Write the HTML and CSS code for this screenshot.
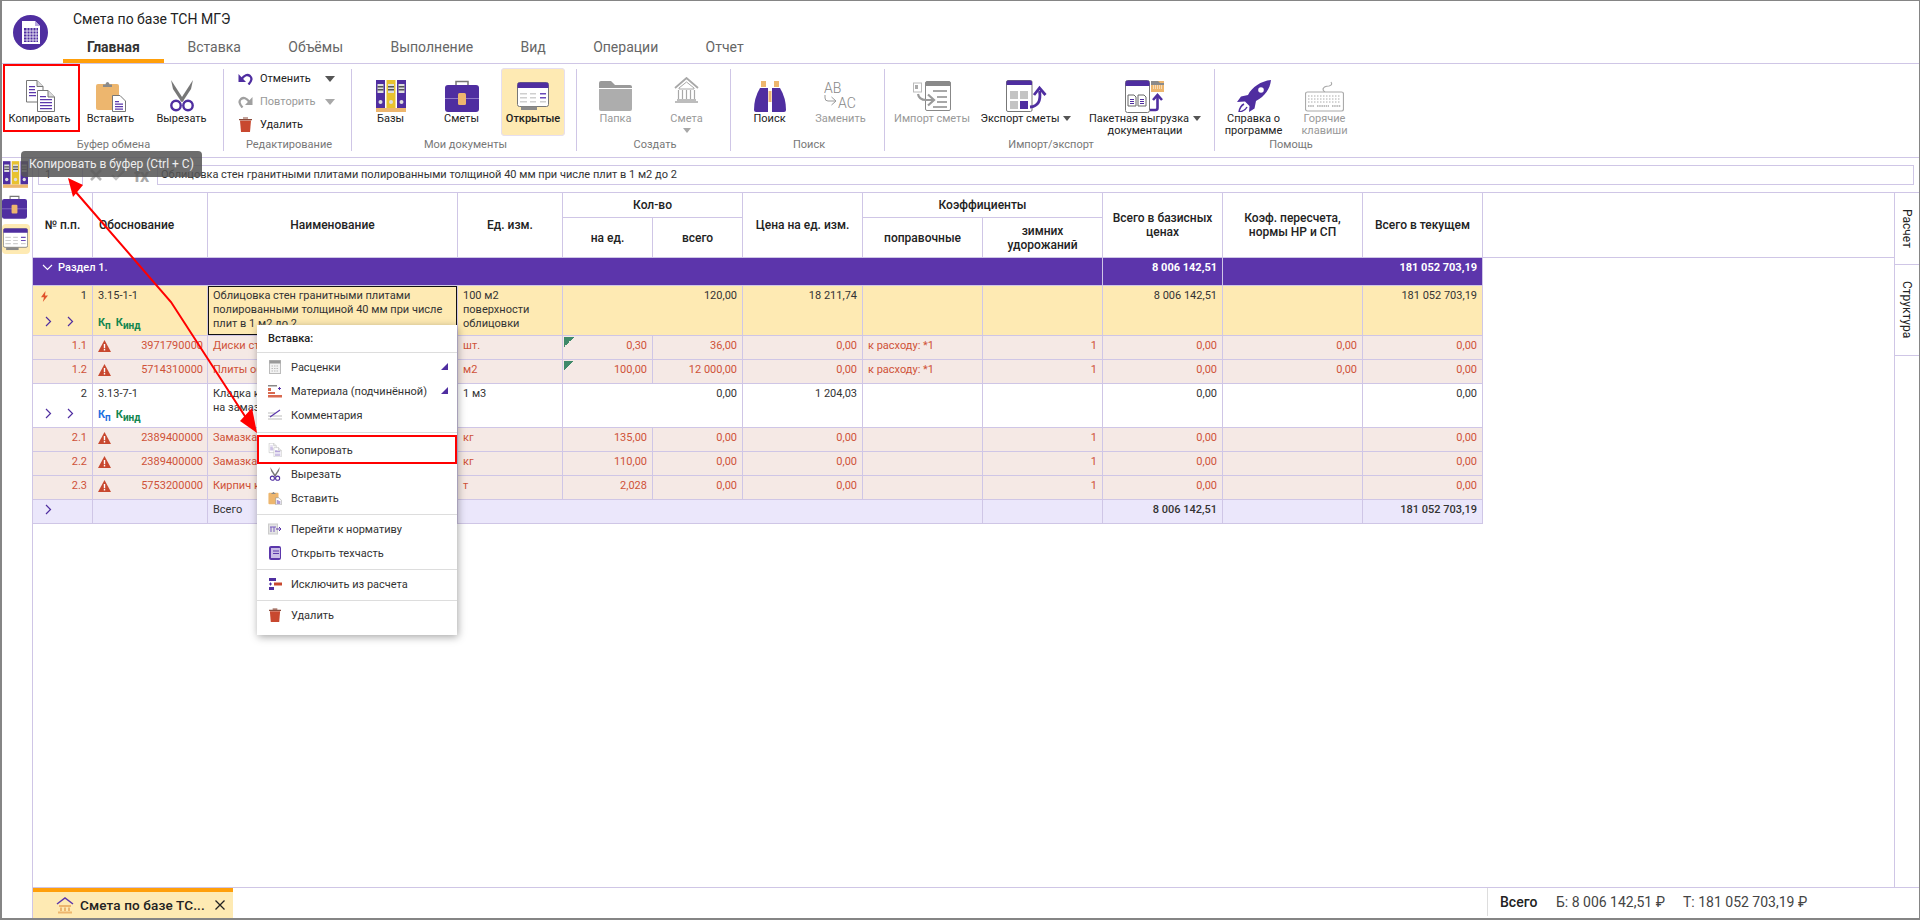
FILE: index.html
```html
<!DOCTYPE html>
<html lang="ru">
<head>
<meta charset="utf-8">
<title>Смета по базе ТСН МГЭ</title>
<link rel="stylesheet" href="styles.css">
</head>
<body>
<svg class="defs" width="0" height="0">
  <symbol id="i-copy" viewBox="0 0 30 32">
    <path d="M1.5.5H12L18 6.500V22H1.500Z" fill="#fff" stroke="#777"/><path d="M12 .5V6.500H18" fill="#ddd" stroke="#777"/>
    <path d="M4 6h6v1.300H4zM4 9h6v1.300H4zM4 12h7v1.300H4zM4 15h7v1.300H4z" fill="#5b37ab"/>
    <path d="M12.500 10.500H23L29.500 17V31.500H12.500Z" fill="#fff" stroke="#777"/><path d="M23 10.500V17H29.500" fill="#ddd" stroke="#777"/>
    <path d="M15 16h6v1.300h-6zM15 19h12v1.300H15zM15 22h12v1.300H15zM15 25h12v1.300H15zM15 28h12v1.300H15z" fill="#5b37ab"/>
  </symbol>
  <symbol id="i-paste" viewBox="0 0 30 32">
    <rect x="0" y="4" width="23" height="26" rx="2" fill="#edb66e"/>
    <path d="M7 7V4.500H9.500A2 2.500 0 0 1 13.500 4.500H16V7Z" fill="#8a8a8a"/>
    <path d="M16.500 15.500H24L29.500 21V31.500H16.500Z" fill="#fff" stroke="#777"/>
    <path d="M19 21h4v1.200h-4zM19 23.500h8v1.200h-8zM19 26h8v1.200h-8zM19 28.500h8v1.200h-8z" fill="#5b37ab"/>
  </symbol>
  <symbol id="i-cut" viewBox="0 0 24 32">
    <path d="M1 0L14 20L11.500 22L3 9Z" fill="#777"/><path d="M23 0L10 20L12.500 22L21 9Z" fill="#777"/>
    <circle cx="6" cy="25.500" r="4.700" fill="none" stroke="#4f2ea0" stroke-width="2.400"/><circle cx="18" cy="25.500" r="4.700" fill="none" stroke="#4f2ea0" stroke-width="2.400"/>
  </symbol>
  <symbol id="i-bases" viewBox="0 0 30 32">
    <rect width="9" height="28" fill="#4f2ea0"/><rect x="10.500" width="9" height="28" fill="#e8c22f"/><rect x="21" width="9" height="28" fill="#4f2ea0"/>
    <path d="M1.500 4h6v9h-6zM12 4h6v9h-6zM22.500 4h6v9h-6z" fill="#ddd"/>
    <path d="M1.500 6h6v1.500h-6zM1.500 9h6v1.500h-6zM12 6h6v1.500h-6zM12 9h6v1.500h-6zM22.500 6h6v1.500h-6zM22.500 9h6v1.500h-6z" fill="#555"/>
    <circle cx="4.500" cy="22" r="2" fill="#ddd"/><circle cx="15" cy="22" r="2" fill="#ddd"/><circle cx="25.500" cy="22" r="2" fill="#ddd"/>
    <rect y="28" width="30" height="4" fill="#edb66e"/>
  </symbol>
  <symbol id="i-case" viewBox="0 0 34 32">
    <path d="M11 6V1.500H23V6" fill="none" stroke="#777" stroke-width="1.500"/>
    <rect y="5" width="34" height="27" rx="3" fill="#4f2ea0"/>
    <rect y="18" width="34" height="1" fill="#8f78c8"/>
    <rect x="13" y="13" width="8" height="12" rx="1.500" fill="#edb66e"/>
  </symbol>
  <symbol id="i-open" viewBox="0 0 32 29">
    <rect x=".5" y=".5" width="31" height="24" rx="2" fill="#fff" stroke="#777"/>
    <path d="M.5 2.500A2 2 0 0 1 2.500.5H29.500A2 2 0 0 1 31.500 2.500V6H.5Z" fill="#4f2ea0"/>
    <path d="M3 11h7v1.500H3zM13 11h6v1.500h-6zM3 15h7v1.500H3zM13 15h6v1.500h-6zM3 19h7v1.500H3zM13 19h6v1.500h-6z" fill="#cfcfcf"/>
    <path d="M23 11h6v1.500h-6zM23 15h6v1.500h-6z" fill="#6b4bb8"/><path d="M23 19h6v1.500h-6z" fill="#cfcfcf"/>
    <path d="M4 24.500H20V28H4Z" fill="#8a8a8a"/>
  </symbol>
  <symbol id="i-folder" viewBox="0 0 33 30">
    <path d="M0 2A2 2 0 0 1 2 0H12L16 4H31A2 2 0 0 1 33 6V7H0Z" fill="#9a9a9a"/>
    <path d="M0 8H33V28A2 2 0 0 1 31 30H2A2 2 0 0 1 0 28Z" fill="#adadad"/>
  </symbol>
  <symbol id="i-bank" viewBox="0 0 25 26">
    <path d="M1 11L12.500 1L24 11" fill="none" stroke="#a8a8a8" stroke-width="1.800"/>
    <path d="M5 11L12.500 5L20 11V12H5Z" fill="none" stroke="#a8a8a8"/>
    <path d="M4.500 13V22M8.500 13V22M12.500 13V22M16.500 13V22M20.500 13V22" stroke="#a8a8a8" stroke-width="1.200"/>
    <path d="M3 23H22M1 25H24" stroke="#a8a8a8" stroke-width="1.300"/>
  </symbol>
  <symbol id="i-bino" viewBox="0 0 32 32">
    <path d="M7 1h5v6H7zM20 1h5v6h-5z" fill="#edb66e"/>
    <path d="M6 8H14V32H2A2 2 0 0 1 0 30Q0 18 6 8Z" fill="#4f2ea0"/><path d="M26 8H18V32H30A2 2 0 0 0 32 30Q32 18 26 8Z" fill="#4f2ea0"/>
    <path d="M14.500 11h3v11h-3z" fill="#edb66e"/>
  </symbol>
  <symbol id="i-import" viewBox="0 0 38 30">
    <rect x=".5" y="2" width="8" height="9" fill="#fff" stroke="#bbb"/><rect x="2" y="4" width="3" height="4" fill="#aaa"/>
    <rect x="12.500" y=".5" width="25" height="29" rx="1.500" fill="#fff" stroke="#888"/>
    <path d="M12.500 2A1.500 1.500 0 0 1 14 .5H36A1.500 1.500 0 0 1 37.500 2V5H12.500Z" fill="#8a8a8a"/>
    <path d="M20 9h14v2H20zM24 15h10v2H24zM24 20h10v2H24zM20 25h14v2H20z" fill="#a8a8a8"/>
    <path d="M5 13Q6 19 13 19H20" fill="none" stroke="#9a9a9a" stroke-width="2.200"/><path d="M15 13.500L21 19L15 24.500" fill="none" stroke="#9a9a9a" stroke-width="2.200"/>
  </symbol>
  <symbol id="i-export" viewBox="0 0 41 32">
    <rect x=".5" y=".5" width="25.500" height="31" rx="1.500" fill="#fff" stroke="#777"/>
    <path d="M.5 2A1.500 1.500 0 0 1 2 .5H24.500A1.500 1.500 0 0 1 26 2V5H.5Z" fill="#4f2ea0"/>
    <path d="M4 11h8v8H4zM14 11h8v8h-8zM4 21h8v8H4z" fill="#c4c4c4"/><rect x="14" y="21" width="8" height="8" fill="#4f2ea0"/>
    <path d="M24 27Q36 26 33.500 11" fill="none" stroke="#4f2ea0" stroke-width="2.800"/><path d="M28 15L33.500 8L39.500 15" fill="none" stroke="#4f2ea0" stroke-width="2.800"/>
  </symbol>
  <symbol id="i-batch" viewBox="0 0 40 33">
    <rect x=".5" y=".5" width="24" height="32" rx="2" fill="#fff" stroke="#777"/>
    <path d="M.5 2.500A2 2 0 0 1 2.500.5H22.500A2 2 0 0 1 24.500 2.500V6H.5Z" fill="#4f2ea0"/>
    <path d="M3 15H9L11 17V26H3ZM13 15H19L21 17V26H13Z" fill="#fff" stroke="#666"/>
    <path d="M5 19h4v1H5zM5 21h4v1H5zM5 23h4v1H5zM15 19h4v1h-4zM15 21h4v1h-4zM15 23h4v1h-4z" fill="#4f2ea0"/>
    <path d="M26 1H39V12H26Z" fill="#edb66e"/><path d="M26 1H33L35 3H39V5H26Z" fill="#8a8a8a"/>
    <path d="M28 6h9M28 8h9" stroke="#fff" stroke-dasharray="1 1"/>
    <path d="M25 30H30.500A2 2 0 0 0 32.500 28V17" fill="none" stroke="#4f2ea0" stroke-width="2.600"/><path d="M28 20L32.500 15L37 20" fill="none" stroke="#4f2ea0" stroke-width="2.600"/>
  </symbol>
  <symbol id="i-rocket" viewBox="0 0 34 32">
    <path d="M34 0C24 1 15 7 11 15L4 16.500L0 22L8 21.500L12.500 26L12 32L17.500 28.500L19 21C28 16 33 9 34 0Z" fill="#4f2ea0"/>
    <circle cx="24" cy="10" r="2.800" fill="#fff"/>
    <path d="M7 24Q3 26 2 32Q8 31 10 27" fill="none" stroke="#4f2ea0" stroke-width="1.500"/>
  </symbol>
  <symbol id="i-keys" viewBox="0 0 39 31">
    <path d="M26 1Q28 4 24 5Q19 5 18 8Q18 10 20 11" fill="none" stroke="#aaa" stroke-width="1.200"/>
    <rect x=".5" y="11" width="38" height="19" rx="2" fill="#fff" stroke="#aaa" stroke-width="1.200"/>
    <path d="M3 15H36M3 18H36M3 21H36" stroke="#aaa" stroke-dasharray="1.500 1.500"/><path d="M3 25H9M12 25H24M27 25H36" stroke="#aaa" stroke-width="1.500" stroke-dasharray="1.500 .7"/>
  </symbol>
  <symbol id="i-trash" viewBox="0 0 13 15">
    <path d="M1 3.500H12L11 15H2Z" fill="#c8482f"/><path d="M0 2H13V3.200H0ZM4 .5H9V1.500H4Z" fill="#8a4a3a"/>
  </symbol>
  <symbol id="i-warn" viewBox="0 0 13 12">
    <path d="M6.500 0L13 12H0Z" fill="#c8482f"/><path d="M5.800 4h1.400v4.200H5.800zM5.800 9h1.400v1.400H5.800z" fill="#fff"/>
  </symbol>
  <symbol id="i-chev" viewBox="0 0 7 11">
    <path d="M1 1L5.500 5.500L1 10" fill="none" stroke="currentColor" stroke-width="1.200"/>
  </symbol>
</svg>

<div class="app">
  <header class="head">
    <svg class="logo" viewBox="0 0 35 35">
      <circle cx="17.500" cy="17.500" r="17.500" fill="#4f2ea0"/>
      <path d="M9 6H22L27 11V29H9Z" fill="#fff"/><path d="M22 6V11H27Z" fill="#b9a9e0"/>
      <path d="M11 13h14v14H11z" fill="#4f2ea0"/>
      <path d="M14 13V27M17 13V27M20 13V27M23 13V27M11 16H25M11 19H25M11 22H25M11 25H25" stroke="#fff" stroke-width=".8"/>
    </svg>
    <div class="head-col">
      <div class="title">Смета по базе ТСН МГЭ</div>
      <nav class="tabs">
        <span class="tab active">Главная</span><span class="tab">Вставка</span><span class="tab">Объёмы</span><span class="tab">Выполнение</span><span class="tab">Вид</span><span class="tab">Операции</span><span class="tab">Отчет</span>
      </nav>
    </div>
  </header>

  <section class="ribbon">
    <div class="grp g1">
      <div class="btns">
        <div class="rb"><div class="ic"><svg class="s30"><use href="#i-copy"/></svg></div><span>Копировать</span></div>
        <div class="rb"><div class="ic"><svg class="s30"><use href="#i-paste"/></svg></div><span>Вставить</span></div>
        <div class="rb"><div class="ic"><svg class="s24"><use href="#i-cut"/></svg></div><span>Вырезать</span></div>
      </div>
      <div class="glabel">Буфер обмена</div>
    </div>
    <div class="grp g2">
      <div class="edit">
        <div class="erow"><svg class="eic" viewBox="0 0 15 12"><path d="M3.500 6Q8 0 12 3Q15.500 6 10.500 11.500" fill="none" stroke="#4f2ea0" stroke-width="2.300"/><path d="M.5 1V9H8Z" fill="#4f2ea0"/></svg><span class="etx">Отменить</span><i class="caret"></i></div>
        <div class="erow off"><svg class="eic" viewBox="0 0 15 12"><path d="M11.500 6Q7 0 3 3Q-.5 6 4.500 11.500" fill="none" stroke="#a0a0a0" stroke-width="2.300"/><path d="M14.500 1V9H7Z" fill="#a0a0a0"/></svg><span class="etx">Повторить</span><i class="caret"></i></div>
        <div class="erow"><svg class="eic trash"><use href="#i-trash"/></svg><span class="etx">Удалить</span></div>
      </div>
      <div class="glabel">Редактирование</div>
    </div>
    <div class="grp g3">
      <div class="btns">
        <div class="rb"><div class="ic"><svg class="s30"><use href="#i-bases"/></svg></div><span>Базы</span></div>
        <div class="rb"><div class="ic"><svg class="s34"><use href="#i-case"/></svg></div><span>Сметы</span></div>
        <div class="rb on"><div class="ic"><svg class="s32"><use href="#i-open"/></svg></div><span>Открытые</span></div>
      </div>
      <div class="glabel">Мои документы</div>
    </div>
    <div class="grp g4">
      <div class="btns">
        <div class="rb off"><div class="ic"><svg class="s33"><use href="#i-folder"/></svg></div><span>Папка</span></div>
        <div class="rb off"><div class="ic top"><svg class="s25"><use href="#i-bank"/></svg></div><span>Смета</span><i class="caret low"></i></div>
      </div>
      <div class="glabel">Создать</div>
    </div>
    <div class="grp g5">
      <div class="btns">
        <div class="rb"><div class="ic"><svg class="s32b"><use href="#i-bino"/></svg></div><span>Поиск</span></div>
        <div class="rb off"><div class="ic"><svg class="s33" viewBox="0 0 33 30"><text x="0" y="12" class="ab">AB</text><text x="14" y="27" class="ab">AC</text><path d="M1 14V17Q1 20 4 20H11M7.500 16L12 20L7.500 24" fill="none" stroke="#999"/></svg></div><span>Заменить</span></div>
      </div>
      <div class="glabel">Поиск</div>
    </div>
    <div class="grp g6">
      <div class="btns">
        <div class="rb w88 off"><div class="ic"><svg class="s38"><use href="#i-import"/></svg></div><span>Импорт сметы</span></div>
        <div class="rb w100"><div class="ic"><svg class="s41"><use href="#i-export"/></svg></div><span>Экспорт сметы<i class="caret in"></i></span></div>
        <div class="rb w138"><div class="ic"><svg class="s40"><use href="#i-batch"/></svg></div><span>Пакетная выгрузка<i class="caret in"></i><br>документации</span></div>
      </div>
      <div class="glabel">Импорт/экспорт</div>
    </div>
    <div class="grp g7">
      <div class="btns">
        <div class="rb"><div class="ic"><svg class="s34"><use href="#i-rocket"/></svg></div><span>Справка о<br>программе</span></div>
        <div class="rb off"><div class="ic"><svg class="s39"><use href="#i-keys"/></svg></div><span>Горячие<br>клавиши</span></div>
      </div>
      <div class="glabel">Помощь</div>
    </div>
  </section>

  <div class="body">
    <aside class="side">
      <svg class="sb1"><use href="#i-bases"/></svg>
      <svg class="sb2"><use href="#i-case"/></svg>
      <div class="sb3"><svg class="sb3i"><use href="#i-open"/></svg></div>
    </aside>
    <div class="content">
      <div class="formula">
        <div class="fcell">1</div>
        <div class="ftools">
          <svg class="fic" viewBox="0 0 14 14"><path d="M2 2L12 12M12 2L2 12" stroke="#b4b4b4" stroke-width="2.600"/></svg>
          <svg class="fic" viewBox="0 0 14 14"><path d="M1 7L5 11L13 3" fill="none" stroke="#c4c4c4" stroke-width="2.400"/></svg>
          <span class="fx">fx</span>
        </div>
        <div class="finput">Облицовка стен гранитными плитами полированными толщиной 40 мм при числе плит в 1 м2 до 2</div>
      </div>
      <div class="main">
        <div class="sheet">
          <table class="grid">
            <colgroup><col class="c60"><col class="c115"><col class="c250"><col class="c105"><col class="c90"><col class="c90"><col class="c120"><col class="c120"><col class="c120"><col class="c120"><col class="c140"><col class="c120"><col class="c411"></colgroup>
            <thead>
              <tr class="h1">
                <th rowspan="2">№ п.п.</th><th rowspan="2" class="lft">Обоснование</th><th rowspan="2">Наименование</th><th rowspan="2">Ед. изм.</th>
                <th colspan="2">Кол-во</th><th rowspan="2">Цена на ед. изм.</th><th colspan="2">Коэффициенты</th>
                <th rowspan="2">Всего в базисных<br>ценах</th><th rowspan="2">Коэф. пересчета,<br>нормы НР и СП</th><th rowspan="2">Всего в текущем</th><th rowspan="2" class="fill"></th>
              </tr>
              <tr class="h2"><th>на ед.</th><th>всего</th><th>поправочные</th><th>зимних<br>удорожаний</th></tr>
            </thead>
            <tbody>
              <tr class="sec">
                <td colspan="9"><svg class="secchev" viewBox="0 0 11 7"><path d="M1 1L5.500 5.500L10 1" fill="none" stroke="#fff" stroke-width="1.100"/></svg>Раздел 1.</td>
                <td class="r">8 006 142,51</td><td colspan="2" class="r">181 052 703,19</td>
              </tr>
              <tr class="y r1">
                <td><div class="numtop"><svg class="bolt" viewBox="0 0 7 11"><path d="M4.500 0L0 6.200H3L1.800 11L7 4.500H4Z" fill="#e0532c"/></svg><span>1</span></div><div class="chevs c13"><svg class="chev"><use href="#i-chev"/></svg><svg class="chev"><use href="#i-chev"/></svg></div></td>
                <td>3.15-1-1<div class="ks c13"><b class="kg">К<sub>п</sub></b><b class="kg">К<sub>инд</sub></b></div></td>
                <td class="sel">Облицовка стен гранитными плитами полированными толщиной 40 мм при числе плит в 1 м2 до 2</td>
                <td>100 м2 поверхности облицовки</td><td colspan="2" class="r">120,00</td><td class="r">18 211,74</td><td></td><td></td><td class="r">8 006 142,51</td><td></td><td class="r">181 052 703,19</td>
              </tr>
              <tr class="p s"><td class="r">1.1</td><td><div class="code"><svg class="warn"><use href="#i-warn"/></svg><span>3971790000</span></div></td><td class="nw">Диски стальные</td><td>шт.</td><td class="r flag">0,30</td><td class="r">36,00</td><td class="r">0,00</td><td>к расходу: *1</td><td class="r">1</td><td class="r">0,00</td><td class="r">0,00</td><td class="r">0,00</td></tr>
              <tr class="p s"><td class="r">1.2</td><td><div class="code"><svg class="warn"><use href="#i-warn"/></svg><span>5714310000</span></div></td><td class="nw">Плиты облицовочные</td><td>м2</td><td class="r flag">100,00</td><td class="r">12 000,00</td><td class="r">0,00</td><td>к расходу: *1</td><td class="r">1</td><td class="r">0,00</td><td class="r">0,00</td><td class="r">0,00</td></tr>
              <tr class="r2">
                <td><div class="numtop"><span></span><span>2</span></div><div class="chevs c7"><svg class="chev"><use href="#i-chev"/></svg><svg class="chev"><use href="#i-chev"/></svg></div></td>
                <td>3.13-7-1<div class="ks c7"><b class="kb">К<sub>п</sub></b><b class="kg">К<sub>инд</sub></b></div></td>
                <td>Кладка кирпичных стен<br>на замазке</td><td>1 м3</td><td colspan="2" class="r">0,00</td><td class="r">1 204,03</td><td></td><td></td><td class="r">0,00</td><td></td><td class="r">0,00</td>
              </tr>
              <tr class="p s"><td class="r">2.1</td><td><div class="code"><svg class="warn"><use href="#i-warn"/></svg><span>2389400000</span></div></td><td class="nw">Замазка</td><td>кг</td><td class="r">135,00</td><td class="r">0,00</td><td class="r">0,00</td><td></td><td class="r">1</td><td class="r">0,00</td><td></td><td class="r">0,00</td></tr>
              <tr class="p s"><td class="r">2.2</td><td><div class="code"><svg class="warn"><use href="#i-warn"/></svg><span>2389400000</span></div></td><td class="nw">Замазка</td><td>кг</td><td class="r">110,00</td><td class="r">0,00</td><td class="r">0,00</td><td></td><td class="r">1</td><td class="r">0,00</td><td></td><td class="r">0,00</td></tr>
              <tr class="p s"><td class="r">2.3</td><td><div class="code"><svg class="warn"><use href="#i-warn"/></svg><span>5753200000</span></div></td><td class="nw">Кирпич керамический</td><td>т</td><td class="r">2,028</td><td class="r">0,00</td><td class="r">0,00</td><td></td><td class="r">1</td><td class="r">0,00</td><td></td><td class="r">0,00</td></tr>
              <tr class="tot s"><td><svg class="chev tchev"><use href="#i-chev"/></svg></td><td></td><td>Всего</td><td colspan="5"></td><td></td><td class="r m">8 006 142,51</td><td></td><td class="r m">181 052 703,19</td></tr>
            </tbody>
          </table>
        </div>
        <div class="vtabs">
          <div class="vtab t1"><span>Расчет</span></div>
          <div class="vtab t2"><span>Структура</span></div>
        </div>
      </div>
      <footer class="bottom">
        <div class="doc">
          <svg class="docic" viewBox="0 0 18 17"><path d="M1 7L9 1L17 7" fill="none" stroke="#5b37ab" stroke-width="1.500"/><path d="M3 8H15V10H3ZM4 10.500H6V14H4ZM8 10.500H10V14H8ZM12 10.500H14V14H12ZM2 14.500H16V16.500H2Z" fill="#edb66e"/></svg>
          <span class="doctx">Смета по базе ТС...</span>
          <svg class="docx" viewBox="0 0 10 10"><path d="M.5.5L9.500 9.500M9.500.5L.5 9.500" stroke="#222" stroke-width="1.300"/></svg>
        </div>
        <div class="status">
          <b>Всего</b><span class="st1">Б: 8 006 142,51 ₽</span><span class="st2">Т: 181 052 703,19 ₽</span>
        </div>
      </footer>
    </div>
  </div>

  <div class="tooltip">Копировать в буфер (Ctrl + C)</div>

  <div class="menu">
    <div class="mhead">Вставка:</div>
    <div class="msep"></div>
    <div class="mi"><svg class="mic" viewBox="0 0 14 14"><rect x="1.500" y=".5" width="11" height="13" fill="#f2f2f2" stroke="#bbb"/><rect x="1.500" y=".5" width="11" height="3" fill="#999"/><path d="M3.500 6h7M3.500 8.500h7M3.500 11h7" stroke="#bbb" stroke-dasharray="1.500 1"/></svg>Расценки<i class="tri"></i></div>
    <div class="mi"><svg class="mic" viewBox="0 0 14 14"><path d="M0 1h9v1.500H0z" fill="#888"/><path d="M0 4h3v3H0zM0 8h7v2H0zM0 11h14v2.500H0z" fill="#d9694f"/><path d="M10 4.500h3M11.500 3v3" stroke="#5b37ab"/></svg>Материала (подчинённой)<i class="tri"></i></div>
    <div class="mi"><svg class="mic" viewBox="0 0 14 14"><path d="M0 5h7M0 8h14M0 11h14" stroke="#bbb" stroke-width="1.200"/><path d="M2 9L12 2" stroke="#5b37ab" stroke-width="1.200"/></svg>Комментария</div>
    <div class="msep wide"></div>
    <div class="mi"><svg class="mic op"><use href="#i-copy"/></svg>Копировать</div>
    <div class="mi"><svg class="mic"><use href="#i-cut"/></svg>Вырезать</div>
    <div class="mi"><svg class="mic"><use href="#i-paste"/></svg>Вставить</div>
    <div class="msep"></div>
    <div class="mi"><svg class="mic" viewBox="0 0 14 14"><rect x=".5" y="2" width="9" height="10" fill="#e4e4e4" stroke="#ccc"/><path d="M3 5v5M6 5v5M2 5h6" stroke="#7b5fc0"/><path d="M8 7h5M11 5l2 2l-2 2" fill="none" stroke="#5b37ab"/></svg>Перейти к нормативу</div>
    <div class="mi"><svg class="mic" viewBox="0 0 14 14"><rect x="1" y="0" width="12" height="14" rx="2" fill="#5b37ab"/><rect x="3" y="2" width="9" height="10" fill="#c9bce6"/><path d="M5 5h6M5 7.500h6" stroke="#5b37ab"/></svg>Открыть техчасть</div>
    <div class="msep"></div>
    <div class="mi"><svg class="mic" viewBox="0 0 14 14"><path d="M1 1h7v3H1z" fill="#4f2ea0"/><path d="M6 5.500h8v3H6z" fill="#c8482f"/><path d="M1 10h5v3H1z" fill="#4f2ea0"/><path d="M1 7h3M2.500 5.500v3" stroke="#4f2ea0"/></svg>Исключить из расчета</div>
    <div class="msep"></div>
    <div class="mi"><svg class="mic" viewBox="0 0 13 15"><use href="#i-trash"/></svg>Удалить</div>
  </div>

  <svg class="anno" viewBox="0 0 1920 920">
    <rect x="4" y="65" width="75" height="66" fill="none" stroke="#f00" stroke-width="2"/>
    <rect x="258" y="436" width="198" height="27" fill="none" stroke="#f00" stroke-width="2"/>
    <path d="M74 190L171 302L250 424" fill="none" stroke="#f00" stroke-width="2"/>
    <path d="M68 178L73 197L83 185Z" fill="#f00"/>
    <path d="M257 433L240 421L252 408Z" fill="#f00"/>
  </svg>
</div>
</body>
</html>
```

FILE: styles.css
```css
* { box-sizing: border-box; }
html, body { margin: 0; padding: 0; height: 100%; overflow: hidden; }
body { background: #fff; font-family: Roboto, "Noto Sans", sans-serif; font-size: 11px; color: #333; }
.defs { position: absolute; }
svg { display: block; }

.app { position: relative; width: 1920px; height: 920px; border-style: solid; border-color: #858585; border-width: 1px 1px 2px 2px; background: #fff; overflow: hidden; }

.head { display: flex; height: 62px; }
.logo { width: 35px; height: 35px; margin: 14px 15px 0 11px; flex: none; }
.head-col { display: flex; flex-direction: column; }
.title { margin: 8px 0 0 10px; font-size: 14px; line-height: 20px; color: #222; }
.tabs { display: flex; margin-top: 8px; }
.tab { height: 26px; padding: 0 23.700px; font-size: 14px; line-height: 20px; color: #666; border-bottom: 4px solid transparent; }
.tab.active { padding: 0 24px; color: #333; font-weight: 700; border-bottom-color: #ff9f0a; }

.ribbon { display: flex; height: 95px; border-top: 1px solid #cfc6e6; border-bottom: 1px solid #cfc6e6; }
.grp { display: flex; flex-direction: column; height: 82px; margin-top: 5px; padding-left: 3px; border-left: 1px solid #cfc6e6; flex: none; }
.g1 { width: 221px; padding-left: 2px; border-left: 0; }
.g2 { width: 128px; }
.g3 { width: 225px; }
.g4, .g5 { width: 154px; }
.g6 { width: 330px; }
.g7 { width: 150px; }
.btns { display: flex; flex: 1; }
.glabel { height: 14px; line-height: 14px; text-align: center; color: #777; font-size: 11px; margin-top: -1px; position: relative; top: 1px; }
.rb { width: 71px; height: 68px; padding-top: 11px; text-align: center; line-height: 12px; color: #222; flex: none; }
.rb.off { color: #999; }
.rb.on { width: 64px; margin: -1px 3px 0 4px; padding-top: 12px; background: #feeab3; border-radius: 4px; box-shadow: inset 0 0 0 1px #e6dff0; font-weight: 500; }
.w88 { width: 88px; }
.w100 { width: 100px; }
.w138 { width: 138px; }
.ic { height: 32px; margin-bottom: 1px; display: flex; justify-content: center; align-items: center; }
.ic.top { align-items: flex-start; margin-top: -3px; padding-top: 0; height: 35px; }
.s30 { width: 30px; height: 32px; }
.s24 { width: 24px; height: 32px; }
.s34 { width: 34px; height: 32px; }
.s32 { width: 32px; height: 29px; }
.s33 { width: 33px; height: 30px; }
.s25 { width: 25px; height: 26px; }
.s32b { width: 32px; height: 32px; }
.s38 { width: 38px; height: 30px; }
.s41 { width: 41px; height: 32px; }
.s40 { width: 40px; height: 33px; }
.s39 { width: 39px; height: 31px; }
.ab { font-family: Roboto, sans-serif; font-weight: 300; font-size: 14px; fill: #888; }
.caret { display: inline-block; width: 0; height: 0; border-left: 5px solid transparent; border-right: 5px solid transparent; border-top: 6px solid #555; }
.off .caret { border-top-color: #a8a8a8; }
.caret.low { display: block; margin: 3px auto 0; border-left-width: 4.500px; border-right-width: 4.500px; border-top-width: 5px; }
.caret.in { margin-left: 4px; vertical-align: 1px; border-left-width: 4.500px; border-right-width: 4.500px; border-top-width: 5px; }

.edit { display: flex; flex-direction: column; flex: 1; padding-left: 11px; margin-top: -2px; }
.erow { display: flex; align-items: center; height: 23px; color: #222; }
.erow.off { color: #999; }
.eic { width: 15px; height: 12px; margin-right: 7px; flex: none; }
.eic.trash { width: 13px; height: 15px; margin-left: 1px; margin-right: 8px; }
.etx { width: 65px; }

.body { display: flex; height: 760px; }
.side { width: 30px; flex: none; padding-top: 3px; }
.sb1 { width: 25px; height: 27px; margin-left: 1px; }
.sb2 { width: 25px; height: 24px; margin: 7px 0 0 0; }
.sb3 { width: 28px; height: 30px; margin-top: 5px; padding: 4px 0 0 1px; background: #feeab3; border-radius: 4px; }
.sb3i { width: 25px; height: 23px; }
.content { flex: 1; min-width: 0; border-left: 1px solid #cfc6e6; display: flex; flex-direction: column; }

.formula { display: flex; height: 34px; padding: 7px 5px 7px 5px; }
.fcell { width: 45px; height: 20px; border: 1px solid #cfc6e6; padding-left: 6px; line-height: 18px; color: #333; }
.ftools { display: flex; align-items: center; width: 74px; padding-left: 6px; }
.fic { width: 14px; height: 14px; margin-right: 8px; }
.fx { font-size: 18px; font-weight: 700; color: #a8a8a8; margin-left: 1px; letter-spacing: -.5px; }
.finput { flex: 1; height: 20px; border: 1px solid #cfc6e6; padding-left: 3px; line-height: 18px; color: #333; white-space: nowrap; overflow: hidden; }

.main { display: flex; height: 695px; border-top: 1px solid #cfc6e6; }
.sheet { width: 1861px; flex: none; }
.grid { width: 1861px; table-layout: fixed; border-collapse: separate; border-spacing: 0; font-size: 11px; line-height: 14px; }
.c60 { width: 60px; } .c115 { width: 115px; } .c250 { width: 250px; } .c105 { width: 105px; } .c90 { width: 90px; } .c120 { width: 120px; } .c140 { width: 140px; } .c411 { width: 411px; }
.grid th, .grid td { border-right: 1px solid #cfc6e6; border-bottom: 1px solid #cfc6e6; overflow: hidden; }
.grid th { padding: 0 4px; text-align: center; vertical-align: middle; font-size: 12px; font-weight: 500; color: #222; }
.grid th.lft { text-align: left; padding-left: 6px; }
.grid th.fill { border-right: 0; }
.h1 { height: 25px; }
.h2 { height: 40px; }
.grid td { padding: 3px 5px 0; vertical-align: top; }
.grid td.r { text-align: right; }
.grid td.nw { white-space: nowrap; }
.grid td.flag { background: linear-gradient(135deg, #3f8a6a 50%, transparent 50%) no-repeat 1px 1px / 10px 10px; }
.sec { height: 28px; background: #5c35ab; color: #fff; font-weight: 500; }
.grid .sec td { padding-top: 3px; font-weight: 700; }
.grid .sec td:first-child { font-weight: 500; padding-left: 9px; }
.secchev { display: inline-block; width: 11px; height: 7px; margin: 0 5px 1px 0; vertical-align: middle; }
.y { background: #feeab3; }
.r1 { height: 50px; }
.r2 { height: 44px; }
.s { height: 24px; }
.p { background: #f5e9e5; color: #cf5238; }
.tot { background: #ebe7fb; }
.grid td.sel { box-shadow: inset 0 0 0 1px #111; }
.numtop { display: flex; justify-content: space-between; align-items: center; height: 14px; }
.bolt { width: 7px; height: 11px; margin-left: 3px; }
.chevs { display: flex; padding-left: 7px; color: #4f2ea0; }
.chev { width: 7px; height: 11px; color: #4f2ea0; margin-right: 15px; flex: none; }
.tchev { margin: 1px 0 0 7px; }
.c13 { margin-top: 13px; }
.c7 { margin-top: 7px; }
.ks { display: flex; gap: 5px; }
.ks b { font-weight: 700; line-height: 14px; }
.ks sub { font-size: 10px; line-height: 0; vertical-align: -3px; }
.kg { color: #12864f; }
.kb { color: #1b6fe0; }
.code { display: flex; justify-content: space-between; align-items: center; height: 14px; margin-right: -1px; }
.warn { width: 13px; height: 12px; }
.m { font-weight: 500; }

.vtabs { flex: 1; border-left: 1px solid #cfc6e6; }
.vtab { display: flex; align-items: center; justify-content: center; border-bottom: 1px solid #cfc6e6; color: #222; font-size: 12px; }
.vtab span { writing-mode: vertical-rl; }
.t1 { height: 72px; }
.t2 { height: 91px; }

.bottom { display: flex; justify-content: space-between; height: 31px; border-top: 1px solid #cfc6e6; }
.doc { width: 200px; display: flex; align-items: center; background: #feeab3; border-top: 4px solid #ff9f0a; padding-left: 23px; }
.docic { width: 18px; height: 17px; margin-right: 6px; }
.doctx { width: 135px; font-size: 13.500px; font-weight: 500; color: #222; white-space: nowrap; letter-spacing: .01em; }
.docx { width: 10px; height: 10px; }
.status { display: flex; align-items: center; width: 432px; height: 28px; padding-left: 12px; border-left: 1px solid #ddd; font-size: 14px; color: #444; }
.status b { font-size: 14px; font-weight: 500; color: #222; width: 56px; }
.st1 { width: 127px; }

.tooltip { position: absolute; left: 19px; top: 150px; width: 181px; height: 26px; padding-left: 8px; background: rgba(85,85,85,.86); border-radius: 4px; color: #eee; font-size: 12px; line-height: 26px; white-space: nowrap; }

.menu { position: absolute; left: 255px; top: 324px; width: 200px; height: 310px; background: #fff; box-shadow: 1px 2px 8px rgba(0,0,0,.35); color: #333; font-size: 11px; }
.mhead { height: 27px; line-height: 27px; padding-left: 11px; font-weight: 500; color: #222; }
.msep { height: 1px; margin: 0 0 2px; background: #ddd; }
.mi + .msep { margin-top: 4px; }
.msep.wide { margin: 5px 0; }
.mi { position: relative; display: flex; align-items: center; height: 24px; padding-left: 11px; white-space: nowrap; }
.mic { width: 14px; height: 14px; margin-right: 9px; flex: none; }
.mic.op { opacity: .6; }
.tri { position: absolute; right: 9px; top: 8px; width: 0; height: 0; border-left: 7px solid transparent; border-bottom: 7px solid #4f2ea0; }

.anno { position: absolute; left: -2px; top: -1px; width: 1920px; height: 920px; pointer-events: none; }
```
